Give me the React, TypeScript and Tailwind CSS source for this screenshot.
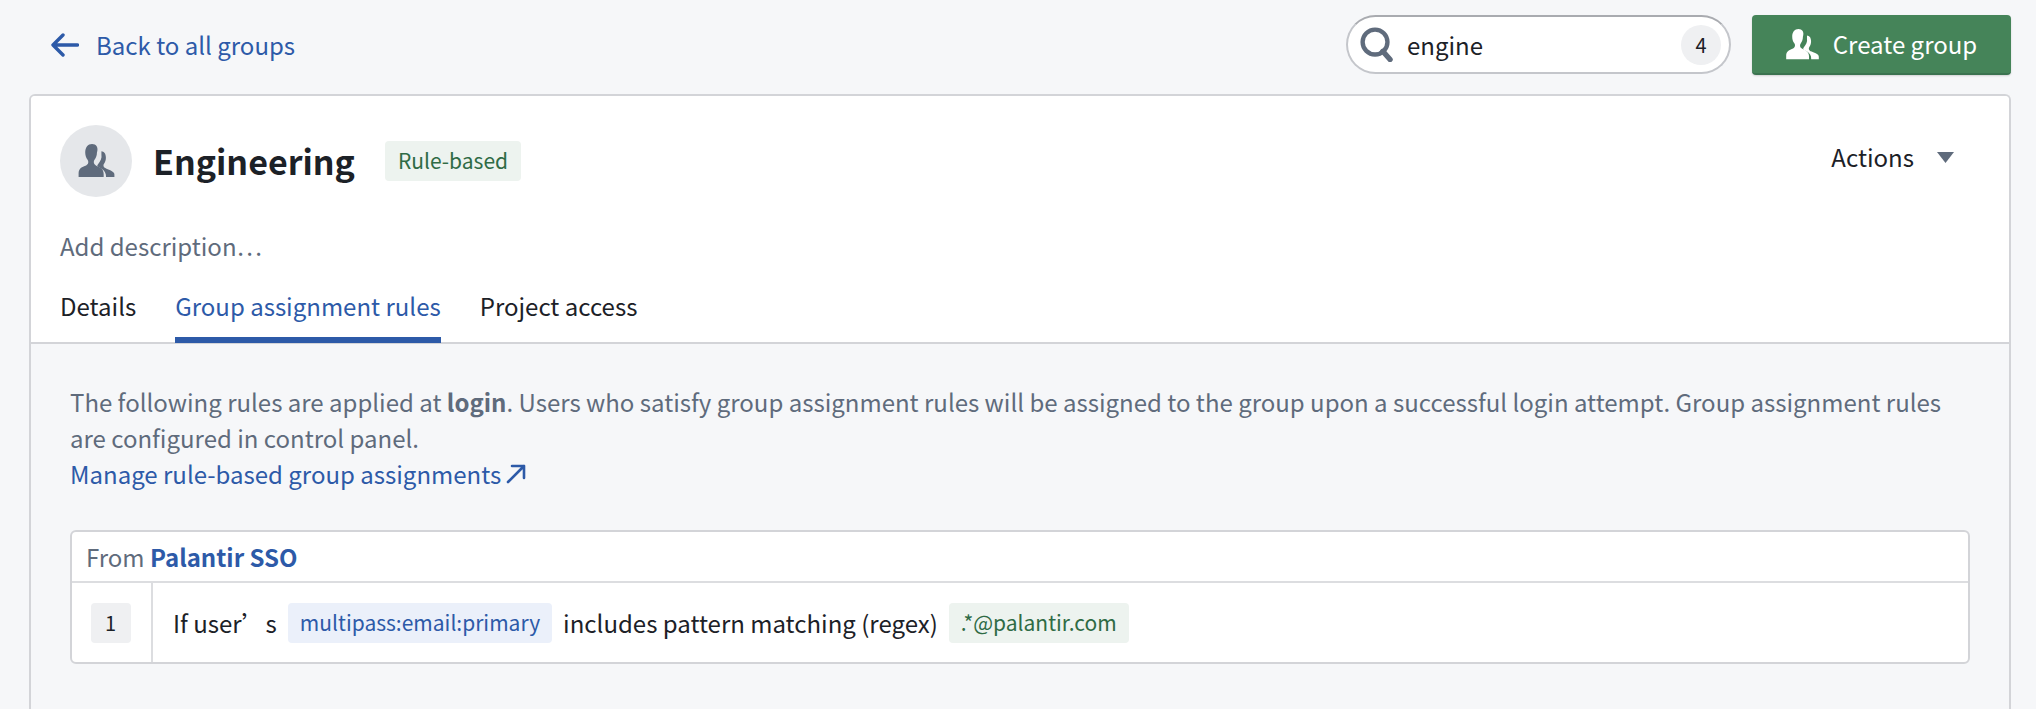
import React from "react";

const FONT = "font-['Noto_Sans_CJK_SC',sans-serif]";

function People({ className, fill }: { className: string; fill: string }) {
  return (
    <svg viewBox="0 0 40 38" className={className} fill={fill}>
      <path d="M15 0c-4.6 0-7.6 3.7-7.6 9.6 0 3.3 1 6 2.6 8 .7 1 .9 1.9.8 3-.2 2-1.6 3-3.9 4C3.600 26 0 27.400 0 33v4h28v-3.500c0-5-3-6.800-6.500-8.400-2.600-1.200-4.300-2.200-4.500-4.400-.1-1.100.1-2 .8-3 1.600-2 2.700-4.700 2.700-8.100C22.500 3.700 19.600 0 15 0z" />
      <path d="M25.500 8c2.800.3 5 2.300 5 7.400 0 2.800-.8 5-2.100 6.600-.6.800-.7 1.500-.6 2.400.2 1.600 1.300 2.400 3.400 3.300 3.300 1.500 8.800 3 8.800 6.300v3h-9.300c.2-4.500-1.900-7.600-5.600-9.700-1.800-1-3.700-1.600-4.300-2.900.1-.7.500-1.200.9-1.900 2.500-3.100 4.600-6.700 3.800-10.800z" />
    </svg>
  );
}

function Chip({ className, children }: { className: string; children: React.ReactNode }) {
  return <span className={`inline-flex items-center h-10 rounded-[4px] text-[21px] ${className}`}>{children}</span>;
}

export default function App() {
  return (
    <div className={`${FONT} h-[709px] overflow-hidden bg-[#f6f7f9] text-[24px] text-[#1c2127] px-[29px] pr-[25px] flex flex-col`}>
      <header className="h-[94px] flex items-start pt-[15px]">
        <a className="flex items-center h-[60px] ml-[22px] gap-[17px] text-[#2d5aa8]">
          <svg viewBox="0 0 28 24" className="w-[28px] h-[24px]" fill="none" stroke="#2d5aa8" strokeWidth="3.400" strokeLinecap="round" strokeLinejoin="round">
            <path d="M26.500 12H2.500M12 2 2 12l10 10" />
          </svg>
          <span>Back to all groups</span>
        </a>
        <div className="ml-auto flex gap-[21px]">
          <div className="w-[385px] h-[59px] rounded-full border-2 border-[#c4c6cb] border-t-[#a9abb0] bg-white flex items-center pl-[12px] pr-[8px]">
            <svg viewBox="0 0 34 36" className="w-[33px] h-[35px]" fill="none" stroke="#5f6b7c" strokeWidth="4.500" strokeLinecap="round">
              <circle cx="15.500" cy="15.500" r="12.800" />
              <path d="m23.500 25 7.500 8.500" strokeWidth="5.500" />
            </svg>
            <span className="ml-[14px]">engine</span>
            <span className="ml-auto w-[40px] h-[40px] rounded-full bg-[#eff0f2] flex items-center justify-center text-[20px]">4</span>
          </div>
          <button className="w-[259px] h-[60px] rounded-[4px] bg-[#458459] border-b-2 border-[#3b7350] text-white flex items-center justify-center gap-[14px] shadow-[0_1px_2px_rgba(0,0,0,0.15)]">
            <People className="w-[33px] h-[31px]" fill="#ffffff" />
            <span>Create group</span>
          </button>
        </div>
      </header>

      <main className="flex-1 border-2 border-b-0 border-[#d3d4d8] rounded-t-[6px] bg-[#f6f7f9] flex flex-col">
        <section className="bg-white rounded-t-[4px] h-[248px] flex flex-col border-b-2 border-[#d3d4d8] px-[29px]">
          <div className="flex items-start pt-[29px]">
            <div className="w-[72px] h-[72px] rounded-full bg-[#e5e7ea] flex items-center justify-center">
              <People className="w-[41px] h-[34px]" fill="#5f6b7c" />
            </div>
            <h1 className="ml-[21px] mt-[14px] text-[34px] leading-[44px] font-semibold">Engineering</h1>
            <Chip className="ml-[30px] mt-[16px] px-[13px] bg-[#edf3ef] text-[#2f6b45]">Rule-based</Chip>
            <div className="ml-auto mt-[14px] mr-[26px] flex items-center gap-[23px]">
              <span>Actions</span>
              <svg viewBox="0 0 17 11" className="w-[17px] h-[11px]" fill="#5f6b7c"><path d="M0 0h17L8.500 11z" /></svg>
            </div>
          </div>
          <p className="mt-[31px] text-[#5f6b7c] leading-[36px]">Add description…</p>
          <nav className="flex gap-[39px] mt-[15px] -mb-[2px] h-[64px] items-stretch">
            <a className="leading-[36px] pt-[9px]">Details</a>
            <a className="leading-[36px] pt-[9px] text-[#2d5aa8] border-b-[6px] border-[#2d5aa8]">Group assignment rules</a>
            <a className="leading-[36px] pt-[9px]">Project access</a>
          </nav>
        </section>

        <section className="flex-1 px-[39px] pt-[40px]">
          <p className="leading-[36px] text-[#5f6b7c]">
            The following rules are applied at <b className="font-semibold">login</b>. Users who satisfy group assignment rules will be assigned to the group upon a successful login attempt. Group assignment rules are configured in control panel.
            <br />
            <a className="text-[#2d5aa8] inline-flex items-center gap-[5px]">
              Manage rule-based group assignments
              <svg viewBox="0 0 20 20" className="w-[20px] h-[20px]" fill="none" stroke="#2d5aa8" strokeWidth="2.600" strokeLinecap="round" strokeLinejoin="round">
                <path d="M2 18 18 2M6 2h12v12" />
              </svg>
            </a>
          </p>

          <div className="mt-[38px] h-[134px] border-2 border-[#d3d4d8] rounded-[6px] bg-white flex flex-col">
            <div className="h-[51px] flex items-center px-[14px] border-b-2 border-[#dcdde0] text-[#5f6b7c]">
              From&nbsp;<span className="font-semibold text-[#2d5aa8]">Palantir SSO</span>
            </div>
            <div className="flex-1 flex">
              <div className="w-[81px] border-r-2 border-[#dcdde0] flex items-center justify-center pr-[2px]">
                <span className="w-[40px] h-[40px] rounded-[4px] bg-[#eff0f2] flex items-center justify-center text-[20px]">1</span>
              </div>
              <div className="flex items-center pl-[20px]">
                <span>If user’s</span>
                <Chip className="ml-[11px] px-[12px] bg-[#ebf0fa] text-[#2d5aa8]">multipass:email:primary</Chip>
                <span className="ml-[11px]">includes pattern matching (regex)</span>
                <Chip className="ml-[11px] px-[12px] bg-[#edf3ef] text-[#2f6b45]">.*@palantir.com</Chip>
              </div>
            </div>
          </div>
        </section>
      </main>
    </div>
  );
}
